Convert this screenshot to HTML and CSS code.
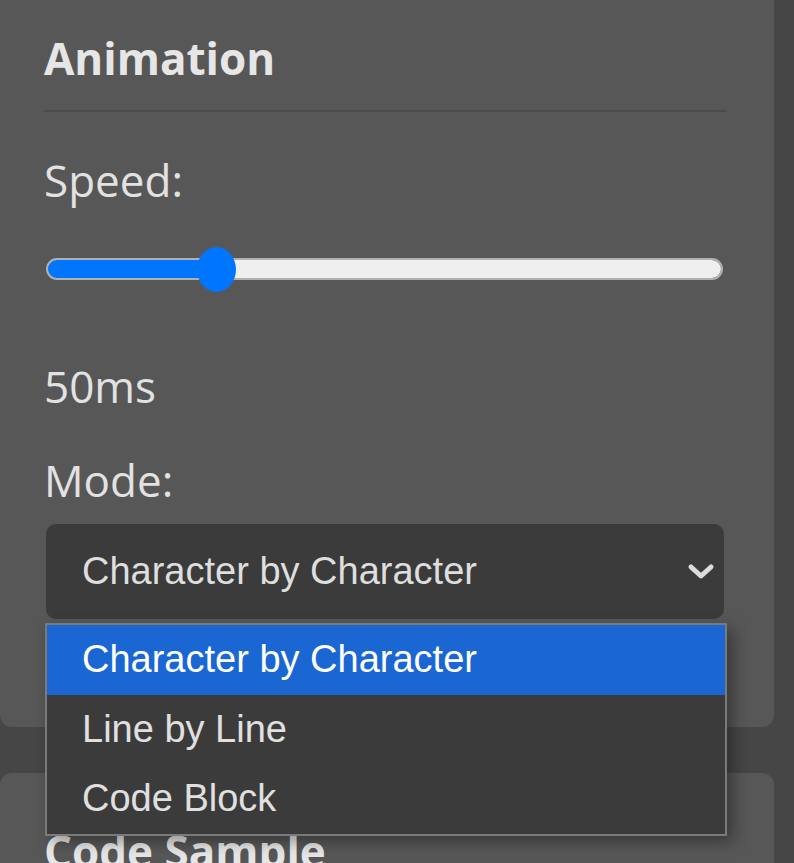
FILE: index.html
```html
<!DOCTYPE html>
<html lang="en">

<head>
    <meta charset="UTF-8">
    <meta name="viewport" content="width=device-width, initial-scale=1.0">
    <title>Typing Animation - Settings</title>
    <link rel="stylesheet" href="styles.css">
</head>

<body>

    <div class="panel">
        <section class="card">
            <h3 class="card-title">Animation</h3>

            <div class="field">
                <label class="field-label" for="speed">Speed:</label>
                <input type="range" id="speed" class="speed-slider" min="10" max="180" value="50" style="--fill: 25.2%;">
                <div class="speed-value">50ms</div>
            </div>

            <div class="field field-mode">
                <label class="field-label">Mode:</label>
                <div class="select">
                    <div class="select-box">
                        Character by Character
                        <svg class="chevron" width="28" height="17" viewBox="0 0 28 17">
                            <polyline points="4,4 14,13 24,4" fill="none" stroke="#dcdcdc" stroke-width="5" stroke-linecap="round" stroke-linejoin="round"/>
                        </svg>
                    </div>
                    <ul class="select-options">
                        <li class="option selected">Character by Character</li>
                        <li class="option">Line by Line</li>
                        <li class="option">Code Block</li>
                    </ul>
                </div>
            </div>
        </section>

        <section class="card card-code">
            <h3 class="card-title">Code Sample</h3>
        </section>
    </div>

</body>

</html>
```

FILE: styles.css
```css
body {
    margin: 0;
    height: 863px;
    background-color: #464646;
    font-family: "Open Sans", sans-serif;
    color: #e2e2e2;
    overflow: hidden;
}

.panel {
    width: 774px;
}

.card {
    background-color: #575757;
    border-radius: 12px;
    padding: 48px 47px 108px 44px;
}

.card:first-child {
    margin-top: -20px;
}

.card-code {
    margin-top: 46px;
    height: 42px;
    padding-bottom: 0;
    overflow: hidden;
    border-radius: 12px 12px 0 0;
}

.card-title {
    margin: 0;
    font-size: 44px;
    line-height: 60px;
    font-weight: 700;
    color: #e6e6e6;
    padding-bottom: 22px;
    border-bottom: 2px solid #4b4b4b;
}

.field {
    margin-top: 38px;
}

.field-mode {
    margin-top: 34px;
}

.field-label {
    display: block;
    font-size: 44px;
    line-height: 60px;
}

.speed-slider {
    -webkit-appearance: none;
    appearance: none;
    display: block;
    width: 677px;
    height: 46px;
    margin: 36px 0 0 2px;
    padding: 0;
    background: transparent;
}

.speed-slider::-webkit-slider-runnable-track {
    height: 22px;
    box-sizing: border-box;
    border: 2px solid #b0b0b0;
    border-radius: 11px;
    background:
        linear-gradient(#0075ff, #0075ff) 0 0 / var(--fill) 100% no-repeat border-box,
        linear-gradient(#efefef, #efefef) padding-box;
}

.speed-slider::-webkit-slider-thumb {
    -webkit-appearance: none;
    width: 39px;
    height: 45px;
    margin-top: -13.5px;
    border-radius: 50%;
    background-color: #0075ff;
    border: none;
}

.speed-value {
    margin-top: 64px;
    font-size: 44px;
    line-height: 60px;
}

.select {
    position: relative;
    margin-top: 14px;
    font-family: "Liberation Sans", Arial, sans-serif;
    font-size: 38px;
}

.select-box {
    position: relative;
    width: 678px;
    height: 95px;
    margin-left: 2px;
    box-sizing: border-box;
    padding-left: 36px;
    line-height: 95px;
    background-color: #3b3b3b;
    border-radius: 10px;
    color: #dedede;
}

.chevron {
    position: absolute;
    top: 39px;
    right: 9px;
}

.select-options {
    position: absolute;
    top: 99px;
    left: 1px;
    width: 682px;
    box-sizing: border-box;
    margin: 0;
    padding: 0;
    list-style: none;
    border: 2px solid #7a7a7a;
    background-color: #3b3b3b;
    box-shadow: 6px 6px 14px rgba(0, 0, 0, 0.35);
}

.option {
    height: 69.5px;
    line-height: 69.5px;
    padding-left: 35px;
    color: #e0e0e0;
}

.option.selected {
    background-color: #1a66d2;
    color: #ffffff;
}
```
